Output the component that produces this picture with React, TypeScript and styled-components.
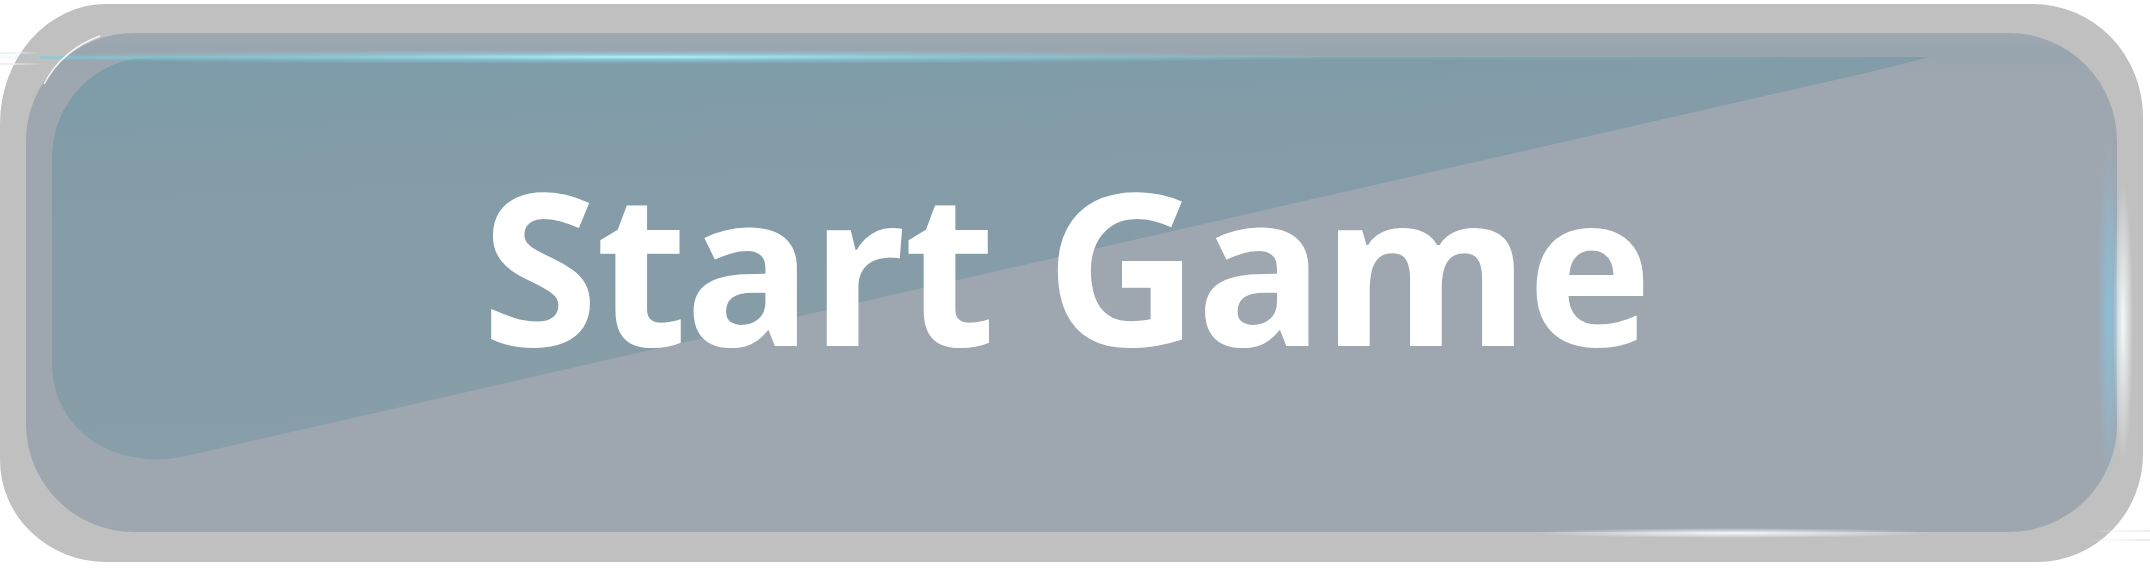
import React from 'react'
import styled, { createGlobalStyle } from 'styled-components'

const GlobalStyle = createGlobalStyle`
  html, body {
    margin: 0;
    padding: 0;
    background: #ffffff;
  }
  * {
    box-sizing: border-box;
  }
`

const Stage = styled.div`
  width: 2150px;
  height: 572px;
  padding: 4px 7px 10px 0;
`

// grey rim of the button
const Frame = styled.div`
  position: relative;
  width: 100%;
  height: 100%;
  display: flex;
  padding: 29px 26px 30px 26px;
  background: #c0c0c0;
  border-radius: 106px 110px 106px 106px / 120px 113px 108px 102px;
`

// slate face that holds the label
const Panel = styled.div`
  position: relative;
  flex: 1;
  display: flex;
  align-items: center;
  justify-content: center;
  overflow: hidden;
  border-radius: 108px;
  background: linear-gradient(180deg, #a0a8b1 0%, #98a5af 4%, #9ea7b0 9%, #9ea7b0 100%);
`

const Overlay = styled.svg`
  position: absolute;
  inset: 0;
  width: 100%;
  height: 100%;
  overflow: visible;
  pointer-events: none;
`

const Label = styled.span`
  position: relative;
  margin-bottom: 38px;
  margin-right: 12px;
  color: #ffffff;
  font-family: "Open Sans", "Noto Sans", sans-serif;
  font-weight: 700;
  font-size: 212px;
  line-height: 1;
  letter-spacing: -2.7px;
  white-space: nowrap;
`

const Shine = () => (
  <Overlay viewBox="0 0 2091 499" preserveAspectRatio="none">
    <defs>
      <linearGradient id="shineFill" x1="0" y1="0" x2="0.2" y2="1">
        <stop offset="0" stopColor="#7d9caa" />
        <stop offset="0.3" stopColor="#849ca8" />
        <stop offset="1" stopColor="#889ea9" />
      </linearGradient>
    </defs>
    <path
      d="M 26 124 A 100 100 0 0 1 126 24 L 1904 24 Q 1880 30 1840 40 L 160 423 C 92 438 26 400 26 330 Z"
      fill="url(#shineFill)"
    />
  </Overlay>
)

// light flares sitting on the rim edges
const Flares = () => (
  <Overlay viewBox="0 0 2143 558" preserveAspectRatio="none">
    <defs>
      <radialGradient id="topFlare">
        <stop offset="0" stopColor="#b4f6fc" stopOpacity="0.95" />
        <stop offset="0.45" stopColor="#8fd6e2" stopOpacity="0.55" />
        <stop offset="1" stopColor="#8fd6e2" stopOpacity="0" />
      </radialGradient>
      <linearGradient id="topLine" x1="0" y1="0" x2="1" y2="0">
        <stop offset="0" stopColor="#7cc4d0" stopOpacity="0.5" />
        <stop offset="0.5" stopColor="#7cc4d0" stopOpacity="0.35" />
        <stop offset="1" stopColor="#7cc4d0" stopOpacity="0" />
      </linearGradient>
      <radialGradient id="sideBlue">
        <stop offset="0" stopColor="#8cc0da" stopOpacity="0.95" />
        <stop offset="1" stopColor="#8cc0da" stopOpacity="0" />
      </radialGradient>
      <radialGradient id="whiteFlare">
        <stop offset="0" stopColor="#f6fbfd" stopOpacity="0.95" />
        <stop offset="1" stopColor="#f6fbfd" stopOpacity="0" />
      </radialGradient>
      <linearGradient id="streak" x1="0" y1="0" x2="1" y2="0">
        <stop offset="0" stopColor="#ebebeb" stopOpacity="0.9" />
        <stop offset="1" stopColor="#ebebeb" stopOpacity="0" />
      </linearGradient>
      <linearGradient id="streakBack" x1="1" y1="0" x2="0" y2="0">
        <stop offset="0" stopColor="#ebebeb" stopOpacity="0.9" />
        <stop offset="1" stopColor="#ebebeb" stopOpacity="0" />
      </linearGradient>
    </defs>
    <rect x="40" y="52" width="1900" height="3" fill="url(#topLine)" />
    <ellipse cx="640" cy="53" rx="700" ry="7" fill="url(#topFlare)" />
    <ellipse cx="2109" cy="310" rx="12" ry="170" fill="url(#sideBlue)" />
    <ellipse cx="2123" cy="318" rx="10" ry="140" fill="url(#whiteFlare)" />
    <ellipse cx="1733" cy="529" rx="200" ry="5" fill="url(#whiteFlare)" />
    <path d="M 44 80 A 104 100 0 0 1 100 32" fill="none" stroke="#ffffff" strokeOpacity="0.85" strokeWidth="1.5" />
    <rect x="0" y="48" width="40" height="2" fill="url(#streak)" />
    <rect x="0" y="59" width="45" height="2" fill="url(#streak)" />
    <rect x="2095" y="526" width="55" height="2" fill="url(#streakBack)" />
    <rect x="2090" y="535" width="60" height="2" fill="url(#streakBack)" />
  </Overlay>
)

export default function App() {
  return (
    <>
      <GlobalStyle />
      <Stage>
        <Frame>
          <Panel>
            <Shine />
            <Label>Start Game</Label>
          </Panel>
          <Flares />
        </Frame>
      </Stage>
    </>
  )
}
